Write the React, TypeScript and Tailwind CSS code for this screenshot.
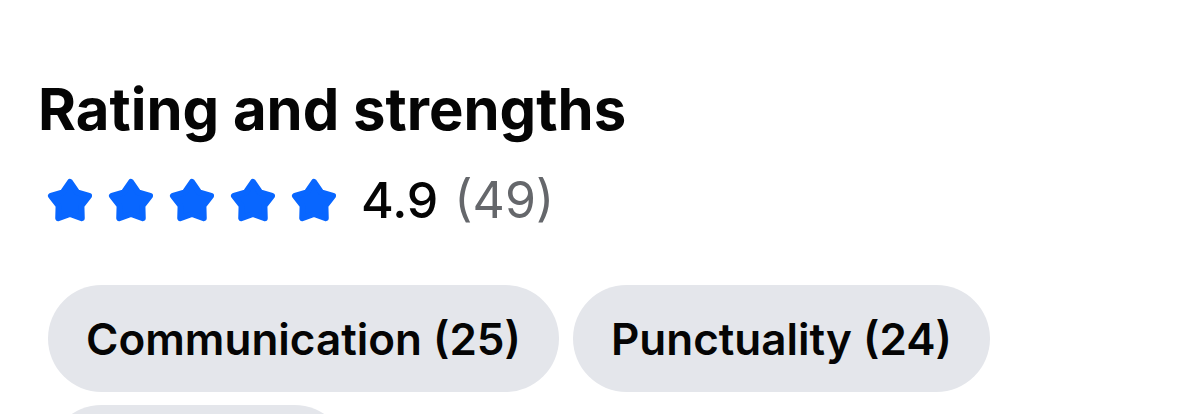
const strengths = [
  { label: 'Communication', count: 25 },
  { label: 'Punctuality', count: 24 },
  { label: 'Quality', count: 9 },
];

// Rounded five-point star, drawn as a polygon with a thick round-joined stroke
const Star = () => (
  <svg width="48" height="46" viewBox="0 0 48 46" className="shrink-0">
    <polygon
      points="24,5 31.05,15.29 43.02,18.82 35.41,28.71 35.76,41.18 24,37 12.24,41.18 12.59,28.71 4.98,18.82 16.95,15.29"
      fill="#0866FF"
      stroke="#0866FF"
      strokeWidth="6"
      strokeLinejoin="round"
    />
  </svg>
);

export default function App() {
  return (
    <div className="w-[1179px] h-[414px] overflow-hidden bg-white pl-[38px] pt-[76px] font-['Inter','Liberation_Sans',sans-serif] text-[#050505]">
      <h2 className="text-[58px] font-bold leading-[67px]">Rating and strengths</h2>

      <div className="mt-[33px] flex h-[48px] items-center pl-[8px]">
        <div className="flex gap-[13px]">
          {[0, 1, 2, 3, 4].map((i) => (
            <Star key={i} />
          ))}
        </div>
        <span className="ml-[23px] text-[50px] font-medium leading-none">4.9</span>
        <span className="ml-[16px] text-[50px] leading-none text-[#65676B]">(49)</span>
      </div>

      <div className="mt-[61px] flex flex-wrap gap-x-[14px] gap-y-[13px] pl-[10px] pr-[150px]">
        {strengths.map((s) => (
          <div
            key={s.label}
            className="flex h-[107px] items-center rounded-full bg-[#E4E6EB] px-[38px] text-[44px] font-semibold"
          >
            {s.label} ({s.count})
          </div>
        ))}
      </div>
    </div>
  );
}
